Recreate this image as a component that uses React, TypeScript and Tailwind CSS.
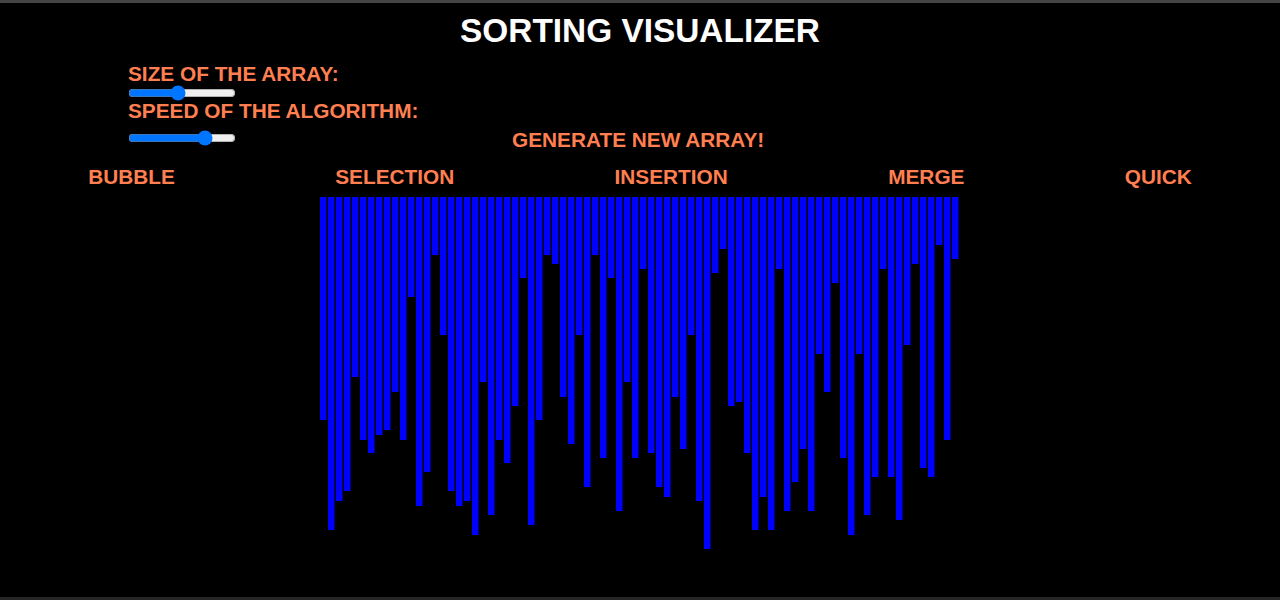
const bottoms = [
  420, 530, 501, 491, 377, 440, 453, 435, 430, 392,
  440, 297, 506, 472, 255, 335, 491, 506, 501, 535,
  382, 515, 440, 463, 406, 278, 525, 420, 255, 264,
  397, 444, 335, 487, 255, 458, 278, 511, 382, 458,
  269, 453, 487, 497, 397, 449, 335, 501, 549, 273,
  249, 406, 402, 453, 530, 497, 530, 269, 511, 482,
  449, 511, 354, 392, 283, 458, 535, 354, 515, 477,
  269, 477, 520, 345, 264, 468, 477, 245, 440, 259,
];

const algorithms = ["BUBBLE", "SELECTION", "INSERTION", "MERGE", "QUICK"];

export default function App() {
  return (
    <div className="h-[600px] overflow-hidden bg-black border-t-[3px] border-b-[3px] border-t-[#444444] border-b-[#262626] font-['Liberation_Sans',Arial,sans-serif] font-bold text-[20.8px] text-[#ff7f50]">
      <h1 className="h-[54px] text-center text-[33.4px] leading-[56px] text-white">SORTING VISUALIZER</h1>
      <div className="pl-[128px] mt-[5px]">
        <div className="h-[23px] leading-[23px]">SIZE OF THE ARRAY:</div>
        <input type="range" min={10} max={160} defaultValue={79} className="block w-[108px]" />
        <div className="h-[23px] leading-[23px] -mt-[2px]">SPEED OF THE ALGORITHM:</div>
      </div>
      <div className="flex h-[35px] items-center pl-[128px]">
        <input type="range" min={0} max={100} defaultValue={75} className="block w-[108px] -mt-[3px]" />
        <button className="ml-[276px] font-bold">GENERATE NEW ARRAY!</button>
      </div>
      <div className="mt-[8px] flex h-[24px] items-center justify-around px-2">
        {algorithms.map((name) => (
          <button key={name} className="font-bold">{name}</button>
        ))}
      </div>
      <div className="mt-[8px] flex items-start justify-center">
        {bottoms.map((bottom, i) => (
          <div key={i} className="mr-px box-content w-[6px] border-r border-r-[#000080] bg-[#0000ff]" style={{ height: bottom - 197 }} />
        ))}
      </div>
    </div>
  );
}
